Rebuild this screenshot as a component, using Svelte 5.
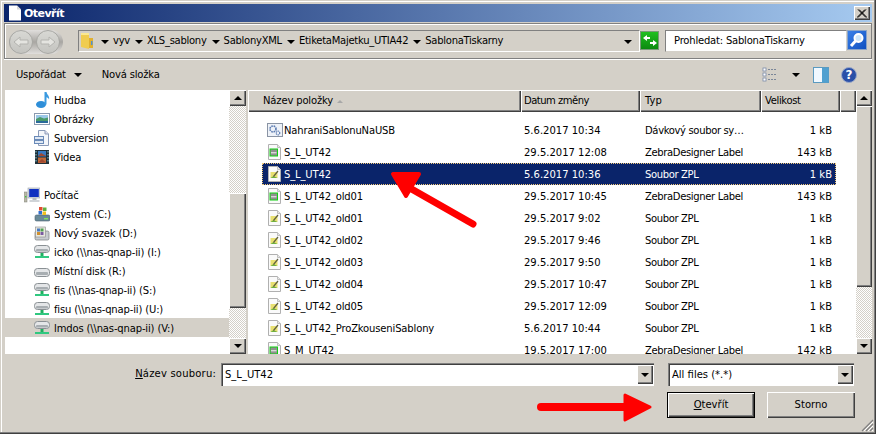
<script>
  const tree = [
    { t: 'Hudba', i: 'music', d: 2 },
    { t: 'Obrázky', i: 'pic', d: 2 },
    { t: 'Subversion', i: 'svn', d: 2 },
    { t: 'Videa', i: 'film', d: 2 },
    { t: '', i: '', d: 2 },
    { t: 'Počítač', i: 'pc', d: 1 },
    { t: 'System (C:)', i: 'sys', d: 2 },
    { t: 'Nový svazek (D:)', i: 'vol', d: 2 },
    { t: 'icko (\\\\nas-qnap-ii) (I:)', i: 'net', d: 2 },
    { t: 'Místní disk (R:)', i: 'disk', d: 2 },
    { t: 'fis (\\\\nas-qnap-ii) (S:)', i: 'net', d: 2 },
    { t: 'fisu (\\\\nas-qnap-ii) (U:)', i: 'net', d: 2 },
    { t: 'lmdos (\\\\nas-qnap-ii) (V:)', i: 'net', d: 2, sel: true }
  ];
  const LB = 'ZebraDesigner Label';
  const ZP = 'Soubor ZPL';
  const files = [
    ['bat', 'NahraniSablonuNaUSB', '5.6.2017 10:34', 'Dávkový soubor sy…', '1 kB'],
    ['lbl', 'S_L_UT42', '29.5.2017 12:08', LB, '143 kB'],
    ['zpl', 'S_L_UT42', '5.6.2017 10:36', ZP, '1 kB', true],
    ['lbl', 'S_L_UT42_old01', '29.5.2017 10:45', LB, '143 kB'],
    ['zpl', 'S_L_UT42_old01', '29.5.2017 9:02', ZP, '1 kB'],
    ['zpl', 'S_L_UT42_old02', '29.5.2017 9:46', ZP, '1 kB'],
    ['zpl', 'S_L_UT42_old03', '29.5.2017 9:50', ZP, '1 kB'],
    ['zpl', 'S_L_UT42_old04', '29.5.2017 10:47', ZP, '1 kB'],
    ['zpl', 'S_L_UT42_old05', '29.5.2017 12:09', ZP, '1 kB'],
    ['zpl', 'S_L_UT42_ProZkouseniSablony', '5.6.2017 10:44', ZP, '1 kB'],
    ['lbl', 'S_M_UT42', '19.5.2017 17:00', LB, '142 kB']
  ];
  const crumbs = ['vyv', 'XLS_sablony', 'SablonyXML', 'EtiketaMajetku_UTIA42', 'SablonaTiskarny'];
</script>

{#snippet icon(k)}
  <svg class="ico" width="16" height="16" viewBox="0 0 16 16">
    {#if k === 'music'}
      <ellipse cx="7" cy="12.5" rx="5" ry="3.5" fill="#2e8ed8"/>
      <path d="M10.5 0 H12.5 C13 3 16 4 15 7.5 C14.5 6 13.5 5.4 12.5 5.2 V12.5 H10.5 Z" fill="#3a9ae0"/>
    {:else if k === 'pic'}
      <rect x="0.5" y="2.5" width="15" height="11" fill="#fff" stroke="#8a9ab0"/>
      <rect x="2" y="4" width="12" height="4" fill="#9cc8e8"/>
      <path d="M2 8 L6 6 L10 7.5 L14 6.5 V10 H2 Z" fill="#4a9a6a"/>
      <rect x="2" y="10" width="12" height="2" fill="#2a6a9a"/>
    {:else if k === 'svn'}
      <path d="M4.5 0.5 H11 L14.5 4 V15.5 H4.5 Z" fill="#f4f6fa" stroke="#8a9ab8"/>
      <path d="M11 0.5 V4 H14.5" fill="#dde" stroke="#8a9ab8"/>
      <rect x="0.5" y="6.5" width="9" height="3" fill="#dfe8f4" stroke="#6a8ab8"/>
      <rect x="0.5" y="10.5" width="9" height="3" fill="#dfe8f4" stroke="#6a8ab8"/>
    {:else if k === 'film'}
      <rect x="1" y="1" width="14" height="14" fill="#203038"/>
      <rect x="4" y="2" width="8" height="5.5" fill="#3a7ac0"/>
      <rect x="4" y="8.5" width="8" height="5.5" fill="#c06a38"/>
      <path d="M4 7 L7 4 L12 7 Z M4 13.5 L8 10 L12 13.5 Z" fill="#a04830"/>
      <path d="M2 2 V14 M14 2 V14" stroke="#8ac8d8" stroke-dasharray="1.5 1.5" stroke-width="1"/>
    {:else if k === 'pc'}
      <rect x="0" y="5" width="3" height="10" fill="#b8b8a8" stroke="#808078" stroke-width="0.5"/>
      <rect x="1" y="9" width="1.4" height="1.4" fill="#40c040"/>
      <rect x="4" y="1" width="12" height="10" fill="#d8dce4" stroke="#98a0a8" stroke-width="0.6"/>
      <rect x="5.2" y="2" width="9.6" height="8" fill="#1030c0"/>
      <rect x="8.5" y="11" width="4" height="2" fill="#b8bcc0"/>
      <rect x="5.5" y="13" width="10" height="2" fill="#d0d4d8"/>
    {:else if k === 'sys'}
      <rect x="1" y="9" width="15" height="6" rx="1.5" fill="#6a8a98" stroke="#4a6070" stroke-width="0.6"/>
      <rect x="10" y="12" width="4" height="1.4" fill="#80e060"/>
      <rect x="5" y="1" width="3.5" height="3.5" fill="#e04a30"/>
      <rect x="9" y="1.5" width="3.5" height="3.5" fill="#60b040"/>
      <rect x="4.5" y="5" width="3.5" height="3.5" fill="#3070d0"/>
      <rect x="8.5" y="5.5" width="3.5" height="3.5" fill="#f0c020"/>
    {:else if k === 'vol'}
      <rect x="1" y="6" width="14" height="9" rx="1.5" fill="#c8ccd0" stroke="#787c80" stroke-width="0.7"/>
      <rect x="1.5" y="2" width="10" height="10" fill="#e8e8e0" stroke="#888" stroke-width="0.6"/>
      <rect x="3" y="3.5" width="3" height="3" fill="#4a7ac0"/>
      <rect x="6.5" y="3.5" width="3" height="3" fill="#50a050"/>
      <rect x="3" y="7" width="3" height="3" fill="#d09030"/>
      <rect x="6.5" y="7" width="3" height="3" fill="#7a5aa0"/>
    {:else if k === 'net'}
      <rect x="0.5" y="1.5" width="15" height="7" rx="3" fill="#e4e6e8" stroke="#8a9094"/>
      <rect x="2" y="5" width="12" height="2.4" rx="1" fill="#a8aeb2"/>
      <rect x="6.5" y="9" width="3" height="3" fill="#20b060"/>
      <rect x="1" y="12" width="14" height="2" fill="#30c880"/>
    {:else if k === 'disk'}
      <rect x="0.5" y="5.5" width="15" height="8" rx="3" fill="#e4e6e8" stroke="#8a9094"/>
      <rect x="2" y="9" width="12" height="3" rx="1" fill="#a8aeb2"/>
    {:else if k === 'bat'}
      <rect x="0.5" y="1.5" width="15" height="13" fill="#eef2f8" stroke="#8a94a4"/>
      <circle cx="6" cy="7" r="3" fill="none" stroke="#5a7ab0" stroke-width="1.6" stroke-dasharray="1.6 0.8"/>
      <circle cx="11" cy="11" r="1.8" fill="none" stroke="#5a7ab0" stroke-width="1.2" stroke-dasharray="1.2 0.6"/>
    {:else}
      <path d="M1.5 0.5 H10.5 L13.5 3.5 V15.5 H1.5 Z" fill="#fafafa" stroke="#b0b0b0"/>
      <path d="M10.5 0.5 V3.5 H13.5" fill="#e8e8e8" stroke="#c0c0c0"/>
      {#if k === 'lbl'}
        <rect x="3" y="5" width="7.5" height="7" fill="#909090" stroke="#10d010" stroke-width="1"/>
        <rect x="4" y="8" width="5.5" height="1.4" fill="#d8d8d8"/>
      {:else}
        <rect x="3.5" y="6" width="7" height="6" fill="#e8e070"/>
        <path d="M3.5 12 L6.5 10 L10.5 12 Z" fill="#70b040"/>
        <path d="M6.5 10.5 L11 5" stroke="#606040" stroke-width="1.2"/>
      {/if}
    {/if}
  </svg>
{/snippet}

{#snippet updown(dir)}
  <div class="sbtn"><span class={dir}></span></div>
{/snippet}

<div class="window">
  <header class="title">
    <svg width="14" height="16" viewBox="0 0 14 16" class="ticon"><path d="M1 0.5 H9 L13 4.5 V15.5 H1 Z" fill="#fff"/><path d="M9 0.5 V4.5 H13" fill="#d8d8d8"/></svg>
    <span>Otevřít</span>
    <div class="close">
      <svg width="10" height="9" viewBox="0 0 10 9"><path d="M1 0.5 L9 8.5 M2 0.5 L10 8.5 M9 0.5 L1 8.5 M8 0.5 L0 8.5" stroke="#000" stroke-width="1"/></svg>
    </div>
  </header>

  <nav class="nav">
    <div class="pill">
      <div class="round"><svg width="16" height="12" viewBox="0 0 16 12"><path d="M1 6 L7 1 V4 H15 V8 H7 V11 Z" fill="#e4e4e0" stroke="#b4b4b0"/></svg></div>
      <div class="round"><svg width="16" height="12" viewBox="0 0 16 12"><path d="M15 6 L9 1 V4 H1 V8 H9 V11 Z" fill="#e4e4e0" stroke="#b4b4b0"/></svg></div>
    </div>
    <div class="addr">
      <svg class="folder" width="14" height="18" viewBox="0 0 14 18"><path d="M1 1 L9 2 V17 L1 15 Z" fill="#f0cc50"/><path d="M1 1 H9 V3 H1 Z" fill="#fbe890"/><path d="M9 6 H13 V16 H9 Z" fill="#e0b030"/><rect x="11" y="9" width="1.5" height="4" fill="#5090d0"/></svg>
      {#each crumbs as c}
        <span class="drop"></span><span class="crumb">{c}</span>
      {/each}
      <span class="spring"></span>
      <span class="drop addr-drop"></span>
    </div>
    <div class="refresh">
      <svg width="16" height="13" viewBox="0 0 16 13"><path d="M1 4 L5 1 V3 H8 V5 H5 V7 Z M15 9 L11 12 V10 H8 V8 H11 V6 Z" fill="#fff"/></svg>
    </div>
    <div class="search">Prohledat: SablonaTiskarny</div>
    <div class="sgo">
      <svg width="16" height="16" viewBox="0 0 16 16"><circle cx="9.5" cy="6" r="4" fill="#cfe6fa" stroke="#fff" stroke-width="2"/><path d="M6.5 9 L2 14" stroke="#fff" stroke-width="3"/></svg>
    </div>
  </nav>

  <div class="toolbar">
    <span class="tb">Uspořádat</span><span class="drop tdrop"></span>
    <span class="tb new">Nová složka</span>
    <span class="spring"></span>
    <svg class="viewi" width="16" height="16" viewBox="0 0 16 16">
      <g fill="#fff" stroke="#7a8aa8" stroke-width="0.8"><rect x="1" y="1" width="3" height="3"/><rect x="1" y="6" width="3" height="3"/><rect x="1" y="11" width="3" height="3"/></g>
      <path d="M6 2.5 H15 M6 7.5 H15 M6 12.5 H15" stroke="#7a8698" stroke-dasharray="2 1"/>
    </svg>
    <span class="drop vdrop"></span>
    <svg class="pane" width="16" height="16" viewBox="0 0 16 16"><rect x="0.5" y="0.5" width="15" height="15" fill="#f0f8ff" stroke="#5a9ac0"/><rect x="9" y="1" width="6.5" height="14.5" fill="#50a0d0"/></svg>
    <svg class="help" width="16" height="16" viewBox="0 0 16 16"><circle cx="8" cy="8" r="7.5" fill="#2a50a8" stroke="#9aa8c8"/><text x="8" y="12" text-anchor="middle" class="q">?</text></svg>
  </div>

  <main class="main">
    <div class="tree">
      {#each tree as r}
        <div class="trow" class:sel={r.sel} class:d1={r.d === 1}>
          {#if r.i}{@render icon(r.i)}{/if}<span>{r.t}</span>
        </div>
      {/each}
    </div>
    <div class="sb tsb">
      {@render updown('up')}
      <div class="trk t1"></div>
      <div class="thumb t2"></div>
      <div class="trk t3"></div>
      {@render updown('dn')}
    </div>
    <section class="list">
      <div class="head">
        <div class="hc h1">Název položky <span class="sort"></span></div>
        <div class="hc h2">Datum změny</div>
        <div class="hc h3">Typ</div>
        <div class="hc h4">Velikost</div>
        <div class="hc h5"></div>
      </div>
      <div class="body">
        {#each files as f}
          <div class="row" class:on={f[5]}>
            <div class="c-name">{@render icon(f[0])}<span>{f[1]}</span></div>
            <div class="c-date">{f[2]}</div>
            <div class="c-type">{f[3]}</div>
            <div class="c-size">{f[4]}</div>
          </div>
        {/each}
      </div>
    </section>
    <div class="sb lsb">
      {@render updown('up')}
      <div class="thumb l2"></div>
      <div class="trk l3"></div>
      {@render updown('dn')}
    </div>
  </main>

  <footer class="foot">
    <div class="frow">
      <label class="lab" for="fn"><u>N</u>ázev souboru:</label>
      <div class="combo c-file"><span id="fn" class="val">S_L_UT42</span><div class="cbtn"><span class="dn"></span></div></div>
      <div class="combo c-filter"><span class="val">All files (*.*)</span><div class="cbtn"><span class="dn"></span></div></div>
    </div>
    <div class="brow">
      <div class="btn def"><span><u>O</u>tevřít</span></div>
      <div class="btn">Storno</div>
    </div>
  </footer>

  <svg class="grip" width="13" height="13" viewBox="0 0 13 13"><path d="M12 1 L1 12 M12 5 L5 12 M12 9 L9 12" stroke="#808080" stroke-width="1.2"/><path d="M12 3 L3 12 M12 7 L7 12 M12 11 L11 12" stroke="#fff" stroke-width="1"/></svg>

  <svg class="arrow a1" width="96" height="62" viewBox="0 0 96 62">
    <path d="M3 3 H29 L16 25 Z" fill="#f00" stroke="#f00" stroke-width="4" stroke-linejoin="round"/>
    <path d="M18 16 L83 53" stroke="#f00" stroke-width="7" stroke-linecap="round"/>
  </svg>
  <svg class="arrow a2" width="120" height="32" viewBox="0 0 120 32">
    <path d="M4 15 H90" stroke="#f00" stroke-width="8" stroke-linecap="round"/>
    <path d="M88 3 L113 15 L88 28 Z" fill="#f00" stroke="#f00" stroke-width="3" stroke-linejoin="round"/>
  </svg>
</div>

<style>
  :global(body) { margin: 0; background: #d4d0c8; }
  .window {
    position: relative;
    box-sizing: border-box;
    width: 876px; height: 434px;
    padding: 4px;
    background: #d4d0c8;
    overflow: hidden;
    color: #000;
    font: 10px/1 "DejaVu Sans", sans-serif;
    box-shadow: inset -1px -1px #404040, inset -2px -2px #808080, inset 1px 1px #d4d0c8, inset 2px 2px #fff;
  }
  .ico { flex: none; display: block; }
  .spring { flex: 1; }

  .title {
    height: 18px;
    display: flex; align-items: center;
    padding: 0 2px;
    background: linear-gradient(90deg, #0a246a, #a6caf0);
    color: #fff;
    font-weight: bold; font-size: 11px;
  }
  .ticon { margin: 0 2px 0 2px; }
  .title span { flex: 1; letter-spacing: -0.55px; }
  .close {
    width: 16px; height: 14px;
    display: flex; align-items: center; justify-content: center;
    background: #d4d0c8;
    box-shadow: inset 1px 1px #fff, inset -1px -1px #404040, inset -2px -2px #808080;
  }

  .nav {
    margin-top: 1px;
    height: 36px;
    box-sizing: border-box;
    display: flex; align-items: flex-start;
    padding: 6px 3px 0 4px;
    border: 1px solid #808080;
    box-shadow: inset 1px 1px #fff, 0 1px #fff;
  }
  .pill {
    width: 54px; height: 24px;
    display: flex; gap: 3px;
    margin: 0 15px 0 0;
    border-radius: 12px;
    background: linear-gradient(#e0dedc, #a8a6a2 50%, #e0dedc);
  }
  .round {
    width: 24px; height: 24px;
    box-sizing: border-box;
    border-radius: 50%;
    display: flex; align-items: center; justify-content: center;
    background: linear-gradient(#d8d8d4, #c4c4c0);
    border: 1px solid #a8a8a4;
  }
  .addr {
    width: 562px; height: 22px;
    box-sizing: border-box;
    display: flex; align-items: center;
    padding: 0 7px 0 1px;
    border: 1px solid;
    border-color: #808080 #fff #fff #808080;
  }
  .folder { margin-right: 2px; }
  .drop {
    flex: none;
    width: 0; height: 0;
    border: 4px solid transparent; border-bottom: 0;
    border-top-color: #000;
    margin: 1px 4px 0 5px;
  }
  .crumb { white-space: nowrap; letter-spacing: -0.27px; }
  .addr-drop { margin: 1px 0 0; }
  .refresh {
    width: 19px; height: 19px;
    box-sizing: border-box;
    margin: 1px 6px 0 0;
    display: flex; align-items: center; justify-content: center;
    background: linear-gradient(#20c020, #0c8a10);
    border: 1px solid #7a9a7a;
  }
  .search {
    flex: none;
    width: 182px; height: 22px;
    box-sizing: border-box;
    padding-left: 8px;
    display: flex; align-items: center;
    background: #fff;
    border: 1px solid;
    border-color: #808080 #d4d0c8 #d4d0c8 #808080;
    letter-spacing: -0.2px;
  }
  .sgo {
    width: 20px; height: 20px;
    display: flex; align-items: center; justify-content: center;
    background: linear-gradient(135deg, #3a80e8, #1050c0);
    border: 1px solid #8aa4c8; box-sizing: border-box;
  }

  .toolbar {
    height: 31px;
    display: flex; align-items: center;
    padding: 0 15px 0 12px;
  }
  .tb { letter-spacing: -0.2px; }
  .tdrop { margin: 1px 0 0 8px; }
  .new { margin-left: 20px; }
  .vdrop { margin: 1px 0 0 14px; }
  .pane { margin-left: 13px; }
  .help { margin-left: 12px; }
  .q { font: bold 12px "DejaVu Sans", sans-serif; fill: #fff; }

  .main {
    height: 264px;
    display: flex;
    padding-left: 1px;
  }
  .tree {
    width: 224px; height: 264px;
    flex: none;
    background: #fff;
    overflow: hidden;
  }
  .trow {
    height: 19px;
    display: flex; align-items: center;
    gap: 4px;
    padding-left: 29px;
    white-space: nowrap;
  }
  .trow span { letter-spacing: -0.15px; padding-top: 2px; }
  .trow.d1 { padding-left: 19px; }
  .trow.sel { background: #d4d0c8; }

  .sb {
    flex: none;
    display: flex; flex-direction: column;
  }
  .tsb { width: 17px; margin-right: 2px; }
  .lsb { width: 16px; }
  .sbtn, .thumb, .cbtn {
    background: #d4d0c8;
    box-shadow: inset 1px 1px #fff, inset -1px -1px #404040, inset -2px -2px #808080;
  }
  .sbtn {
    height: 16px; flex: none;
    display: flex; align-items: center; justify-content: center;
  }
  .trk {
    background: repeating-conic-gradient(#d4d0c8 0 25%, #fff 0 50%) 0 0 / 2px 2px;
  }
  .t1 { height: 87px; }
  .t2 { height: 115px; }
  .t3 { height: 30px; }
  .l2 { height: 181px; }
  .l3 { height: 51px; }
  .up, .dn { display: block; width: 0; height: 0; border: 4px solid transparent; }
  .up { border-top: 0; border-bottom-color: #000; }
  .dn { border-bottom: 0; border-top-color: #000; }

  .list {
    width: 608px; flex: none;
    display: flex; flex-direction: column;
    overflow: hidden;
  }
  .head { height: 22px; flex: none; display: flex; }
  .hc {
    box-sizing: border-box;
    display: flex; align-items: center; gap: 4px;
    padding-left: 15px;
    box-shadow: inset 1px 1px #fff, inset -1px -1px #404040, inset -2px -2px #808080;
    white-space: nowrap;
  }
  .h1 { width: 273px; letter-spacing: -0.15px; }
  .h2 { width: 119px; padding-left: 3px; letter-spacing: -0.5px; }
  .h3 { width: 121px; padding-left: 5px; }
  .h4 { width: 79px; padding-left: 4px; letter-spacing: -0.35px; }
  .h5 { flex: 1; }
  .sort {
    width: 0; height: 0;
    border: 3px solid transparent; border-top: 0;
    border-bottom-color: #a8a8a8;
  }
  .body {
    flex: 1;
    background: #fff;
    padding: 7px 0 0 14px;
    overflow: hidden;
  }
  .row {
    box-sizing: border-box;
    height: 22px; width: 574px;
    display: grid;
    grid-template-columns: 259px 121px 120px 74px;
    align-items: center;
    white-space: nowrap;
  }
  .row.on {
    background: #0a246a; color: #fff;
    outline: 1px dotted #f0c878; outline-offset: -1px;
  }
  .c-name { display: flex; align-items: center; gap: 1px; padding-left: 5px; }
  .c-name span { letter-spacing: -0.15px; padding-top: 2px; }
  .c-date, .c-type, .c-size { padding-top: 1px; }
  .c-date, .c-type { padding-left: 3px; }
  .c-type { letter-spacing: -0.35px; }
  .c-size { text-align: right; padding-right: 4px; }

  .foot { height: 76px; box-sizing: border-box; padding-top: 9px; }
  .frow { display: flex; height: 23px; }
  .lab { width: 212px; text-align: right; margin-right: 5px; align-self: center; padding-bottom: 2px; letter-spacing: 0.2px; }
  .combo {
    flex: none;
    box-sizing: border-box;
    height: 23px;
    display: flex; align-items: center; justify-content: space-between;
    background: #fff;
    padding: 2px 1px 2px 4px;
    box-shadow: inset 1px 1px #808080, inset 2px 2px #404040, inset -1px -1px #fff;
  }
  .c-file { width: 433px; margin-right: 14px; }
  .c-filter { width: 186px; }
  .cbtn {
    width: 16px; height: 19px;
    display: flex; align-items: center; justify-content: center;
  }
  .brow {
    margin-top: 6px;
    display: flex; justify-content: flex-end; gap: 12px;
    padding-right: 17px;
  }
  .btn {
    width: 88px; height: 26px;
    box-sizing: border-box;
    display: flex; align-items: center; justify-content: center;
    box-shadow: inset 1px 1px #fff, inset -1px -1px #404040, inset -2px -2px #808080;
  }
  .btn.def { border: 1px solid #000; }
  .grip { position: absolute; right: 2px; bottom: 2px; }
  .arrow { position: absolute; }
  .a1 { left: 390px; top: 171px; }
  .a2 { left: 537px; top: 392px; }
</style>
